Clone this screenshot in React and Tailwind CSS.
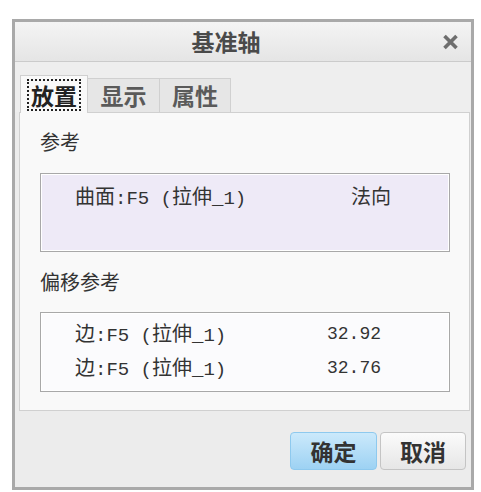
import React from "react";

const font = { fontFamily: '"Noto Sans CJK SC", "Noto Sans", sans-serif' };
const mono = { fontFamily: '"Liberation Mono", "Noto Sans CJK SC", monospace' };

function Ref({ a }) {
  return (
    <span className="whitespace-pre">
      {a}
      <span className="text-[19px]" style={mono}>:F5 (</span>
      拉伸
      <span className="text-[19px]" style={mono}>_1)</span>
    </span>
  );
}

export default function App() {
  return (
    <div className="w-[481px] h-[492px] bg-white pt-[19px] pl-[12px]" style={font}>
      <div className="w-[462px] h-[471px] border-[3px] border-[#a9a9a9] bg-[#ececec] flex flex-col">
        {/* Title bar */}
        <div className="h-[40px] shrink-0 flex items-center bg-gradient-to-b from-[#f4f4f4] to-[#e5e5e5] border-b border-[#cbcbcb]">
          <div className="flex-1 text-center text-[23px] font-bold text-[#4a4a4a] pl-[6px] leading-none">基准轴</div>
          <div className="w-[40px] pr-[12px] flex justify-end">
            <svg width="17" height="16" viewBox="0 0 17 16">
              <path d="M2.5 2 L14.5 14 M14.5 2 L2.5 14" stroke="#6e6e6e" strokeWidth="3.6" strokeLinecap="butt" />
            </svg>
          </div>
        </div>
        {/* Tabs */}
        <div className="h-[50px] shrink-0 flex items-end pl-[5px] bg-[#eeeeee]">
          <div className="relative z-10 -mb-px h-[38px] w-[68px] bg-[#f9f9f9] border border-b-0 border-[#d0d0d0] flex items-center justify-center">
            <span className="px-[2px] border-2 border-dotted border-[#222] text-[23px] font-bold text-[#222] leading-[28px]">放置</span>
          </div>
          <div className="h-[34px] w-[72px] bg-[#e6e6e6] border border-b-0 border-l-0 border-[#d0d0d0] flex items-center justify-center text-[23px] font-bold text-[#5a5a5a] leading-none">显示</div>
          <div className="h-[34px] w-[71px] bg-[#e6e6e6] border border-b-0 border-l-0 border-[#d0d0d0] flex items-center justify-center text-[23px] font-bold text-[#5a5a5a] leading-none">属性</div>
        </div>
        {/* Panel */}
        <div className="ml-[4px] w-[451px] h-[299px] shrink-0 bg-[#f9f9f9] border border-[#d0d0d0] pl-[20px] pt-[17px] text-[20px] text-[#333]">
          <div className="leading-[24px]">参考</div>
          <div className="mt-[19px] w-[410px] h-[79px] bg-[#eeeaf7] border border-[#a8a8a8] shadow-[inset_0_0_0_1px_#ffffff] pl-[34px] pt-[10px]">
            <div className="grid grid-cols-[276px_1fr] leading-[24px]">
              <Ref a="曲面" />
              <span>法向</span>
            </div>
          </div>
          <div className="mt-[18px] leading-[24px]">偏移参考</div>
          <div className="mt-[18px] w-[410px] h-[80px] bg-[#fbfbfd] border border-[#a8a8a8] shadow-[inset_0_0_0_1px_#ffffff] pl-[34px] pt-[4px]">
            <div className="grid grid-cols-[252px_1fr] h-[34px] items-center">
              <Ref a="边" />
              <span className="text-[18px]" style={mono}>32.92</span>
            </div>
            <div className="grid grid-cols-[252px_1fr] h-[34px] items-center">
              <Ref a="边" />
              <span className="text-[18px]" style={mono}>32.76</span>
            </div>
          </div>
        </div>
        {/* Footer */}
        <div className="flex-1 flex justify-end items-start pt-[21px] pr-[5px] gap-[3px] bg-[#ececec]">
          <button className="w-[87px] h-[38px] rounded-[4px] border border-[#8ec9ee] bg-gradient-to-b from-[#cbe9fb] to-[#9dd2f3] text-[23px] font-bold text-[#333] leading-none">确定</button>
          <button className="w-[86px] h-[38px] rounded-[4px] border border-[#c4c4c4] bg-gradient-to-b from-[#fbfbfb] to-[#e6e6e6] text-[23px] font-bold text-[#333] leading-none">取消</button>
        </div>
      </div>
    </div>
  );
}
